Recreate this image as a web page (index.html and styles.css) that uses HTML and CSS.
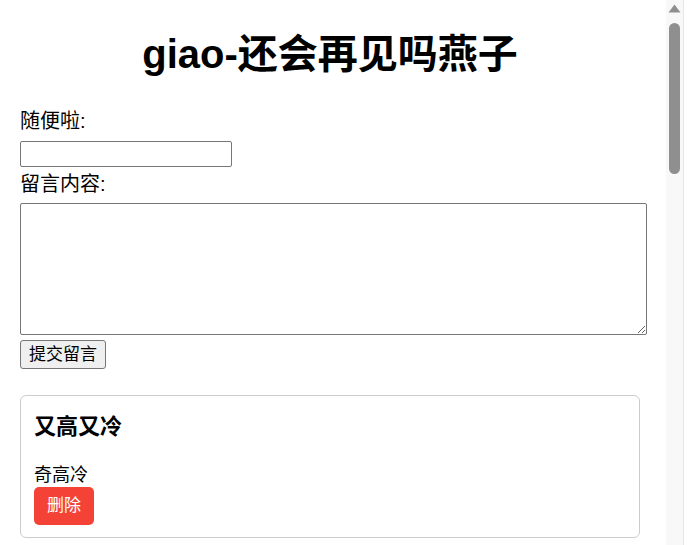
FILE: index.html
```html
<!DOCTYPE html>
<html lang="zh">
<head>
<meta charset="utf-8">
<title>giao-还会再见吗燕子</title>
<link rel="stylesheet" href="styles.css">
</head>
<body>
<main class="page">
<h1 class="title">giao-还会再见吗燕子</h1>
<form class="form">
  <label class="label" for="name">随便啦:</label>
  <input class="name-input" id="name" type="text">
  <label class="label label-msg" for="msg">留言内容:</label>
  <textarea class="msg-input" id="msg"></textarea>
  <button class="submit" type="button">提交留言</button>
</form>
<div class="list">
  <div class="card">
    <h3 class="card-title">又高又冷</h3>
    <p class="card-text">奇高冷</p>
    <button class="delete" type="button">删除</button>
  </div>
  <div class="card">
    <h3 class="card-title">又高又冷</h3>
    <p class="card-text">奇高冷</p>
    <button class="delete" type="button">删除</button>
  </div>
  <div class="card">
    <h3 class="card-title">又高又冷</h3>
    <p class="card-text">奇高冷</p>
    <button class="delete" type="button">删除</button>
  </div>
  <div class="card">
    <h3 class="card-title">又高又冷</h3>
    <p class="card-text">奇高冷</p>
    <button class="delete" type="button">删除</button>
  </div>
  <div class="card">
    <h3 class="card-title">又高又冷</h3>
    <p class="card-text">奇高冷</p>
    <button class="delete" type="button">删除</button>
  </div>
  <div class="card">
    <h3 class="card-title">又高又冷</h3>
    <p class="card-text">奇高冷</p>
    <button class="delete" type="button">删除</button>
  </div>
  <div class="card">
    <h3 class="card-title">又高又冷</h3>
    <p class="card-text">奇高冷</p>
    <button class="delete" type="button">删除</button>
  </div>
  <div class="card">
    <h3 class="card-title">又高又冷</h3>
    <p class="card-text">奇高冷</p>
    <button class="delete" type="button">删除</button>
  </div>
  <div class="card">
    <h3 class="card-title">又高又冷</h3>
    <p class="card-text">奇高冷</p>
    <button class="delete" type="button">删除</button>
  </div>
</div>
</main>
<div class="scrollbar" aria-hidden="true">
  <svg class="scroll-arrow" width="13" height="9" viewBox="0 0 13 9"><path d="M6.5 0.5 L12.5 8.5 L0.5 8.5 Z" fill="#8f8f8f"/></svg>
  <div class="scroll-thumb"></div>
</div>
</body>
</html>
```
FILE: styles.css
```css
html, body {
  margin: 0;
  padding: 0;
}
body {
  font-family: "Liberation Sans", "Noto Sans CJK SC", sans-serif;
  font-size: 18px;
  color: #000;
  background: #fff;
}
.page {
  box-sizing: border-box;
  width: 660px;
  padding: 20px;
}
.title {
  margin: 10px 0 31px;
  font-size: 40px;
  line-height: 48px;
  font-weight: bold;
  text-align: center;
}
.form {
  display: flex;
  flex-direction: column;
  align-items: flex-start;
}
.label {
  display: block;
  height: 24px;
  line-height: 24px;
  margin-bottom: 8px;
  font-size: 20px;
}
.label-msg {
  margin-top: 5px;
  margin-bottom: 7px;
}
.name-input {
  box-sizing: border-box;
  width: 212px;
  height: 26px;
  margin: 0;
  border: 1px solid #767676;
  border-radius: 2px;
  padding: 1px 4px;
  font-size: 16px;
  font-family: inherit;
}
.msg-input {
  box-sizing: border-box;
  width: 627px;
  height: 132px;
  margin: 0;
  border: 1px solid #767676;
  border-radius: 2px;
  padding: 2px;
  font-family: inherit;
  font-size: 16px;
}
.submit {
  box-sizing: border-box;
  margin-top: 5px;
  height: 29px;
  padding: 0 8px;
  font-size: 17px;
  font-family: inherit;
  line-height: 27px;
  background: #efefef;
  border: 1px solid #767676;
  border-radius: 3px;
  color: #000;
}
.list {
  margin-top: 26px;
  display: flex;
  flex-direction: column;
  gap: 20px;
}
.card {
  box-sizing: border-box;
  width: 620px;
  border: 1px solid #ccc;
  border-radius: 6px;
  padding: 14px 13px 12px;
}
.card-title {
  margin: 4px 0 0;
  font-size: 22px;
  line-height: 26px;
  font-weight: bold;
}
.card-text {
  margin: 23px 0 0;
  font-size: 18px;
  line-height: 24px;
}
.delete {
  display: block;
  box-sizing: border-box;
  height: 38px;
  padding: 0 13px;
  border: none;
  border-radius: 5px;
  background: #f44336;
  color: #fff;
  font-size: 17px;
  font-family: inherit;
  line-height: 38px;
}
.scrollbar {
  position: fixed;
  top: 0;
  right: 3px;
  width: 18px;
  height: 100%;
  box-sizing: border-box;
  background: #f8f8f8;
  border-right: 1px solid #e6e6e6;
  display: flex;
  flex-direction: column;
  align-items: center;
}
.scroll-arrow {
  display: block;
  margin-top: 4px;
}
.scroll-thumb {
  width: 11px;
  height: 151px;
  margin-top: 10px;
  border-radius: 6px;
  background: #8f8f8f;
}
```
